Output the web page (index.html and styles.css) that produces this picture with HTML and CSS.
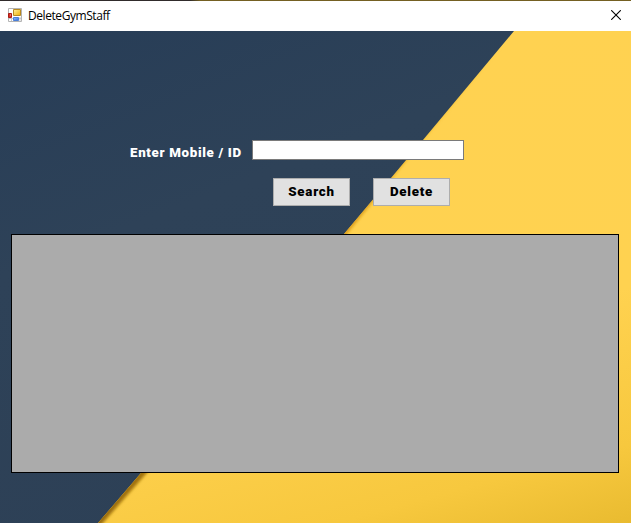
FILE: index.html
```html
<!DOCTYPE html>
<html lang="en">
<head>
<meta charset="utf-8">
<title>DeleteGymStaff</title>
<link rel="stylesheet" href="styles.css">
</head>
<body>
<div class="window">
  <header class="titlebar">
    <svg class="app-icon" width="14" height="14" viewBox="0 0 14 14">
      <defs>
        <linearGradient id="gold" x1="0" y1="0" x2="1" y2="1"><stop offset="0" stop-color="#fff0a0"/><stop offset="1" stop-color="#eeb000"/></linearGradient>
        <linearGradient id="blue" x1="0" y1="0" x2="1" y2="1"><stop offset="0" stop-color="#9cc4ff"/><stop offset="1" stop-color="#2868d8"/></linearGradient>
      </defs>
      <path d="M.5.5h13v13H.5z" fill="#fff" stroke="#b4b4b4"/>
      <path d="M3.500 10v3M12 9v4M1 10.500h12" stroke="#c9c9c9"/>
      <path d="M.5 5.500h3v4h-3z" fill="#d83028" stroke="#a81c14"/>
      <path d="M2 7h1" stroke="#ffb0a0"/>
      <path d="M5.500 1.500h7v6h-7z" fill="url(#gold)" stroke="#b88a20"/>
      <path d="M5.500 9.500h5v3h-5z" fill="url(#blue)" stroke="#4a7fd8"/>
    </svg>
    <h1 class="title">DeleteGymStaff</h1>
    <svg class="close" width="10" height="10" viewBox="0 0 10 10"><path d="M.2.2l9.600 9.600M9.800.2l-9.600 9.600" stroke="#000" stroke-width="1.100"/></svg>
  </header>
  <main class="form">
    <svg class="backdrop" width="631" height="492" viewBox="0 0 631 492">
      <defs>
        <linearGradient id="navy" x1="0" y1="0" x2=".5" y2="1"><stop offset="0" stop-color="#273d57"/><stop offset=".4" stop-color="#2e4258"/><stop offset="1" stop-color="#2d4056"/></linearGradient>
        <linearGradient id="yellow" gradientUnits="userSpaceOnUse" x1="500" y1="0" x2="631" y2="492"><stop offset="0" stop-color="#ffd251"/><stop offset=".55" stop-color="#ffd250"/><stop offset=".85" stop-color="#f7c83e"/><stop offset="1" stop-color="#e9bb30"/></linearGradient>
        <linearGradient id="shade" x1="0" y1="0" x2="0" y2="1"><stop offset="0" stop-color="#d99b16" stop-opacity="0"/><stop offset=".4" stop-color="#d99b16"/><stop offset="1" stop-color="#966a08"/></linearGradient>
        <filter id="soft" x="-10%" y="-10%" width="120%" height="120%"><feGaussianBlur stdDeviation="1.800"/></filter>
        <clipPath id="sheet"><path d="M514 0L423 109L344 203L141 442L98 492H631V0z"/></clipPath>
      </defs>
      <path d="M0 0h631v492H0z" fill="url(#navy)"/>
      <path d="M514 0L423 109L344 203L141 442L98 492H631V0z" fill="url(#yellow)"/>
      <g clip-path="url(#sheet)"><path d="M514 0L415 109L336 203L133 442L80 502H94L145 444L346 204L423 109z" fill="url(#shade)" filter="url(#soft)"/></g>
    </svg>
    <div class="field">
      <label class="label" for="staff">Enter Mobile / ID</label>
      <input class="entry" id="staff" type="text">
    </div>
    <div class="actions">
      <button class="button" type="button">Search</button>
      <button class="button" type="button">Delete</button>
    </div>
    <div class="grid"></div>
  </main>
</div>
</body>
</html>
```

FILE: styles.css
```css
* { box-sizing: border-box; }
body { margin: 0; overflow: hidden; }
.window { width: 631px; height: 523px; display: flex; flex-direction: column; }
.titlebar {
  height: 31px;
  padding: 0 10px 0 8px;
  display: flex;
  align-items: center;
  background: linear-gradient(90deg, #302b2b 0 190px, #746022 200px) top / 100% 1px no-repeat #fff;
}
.app-icon { margin-bottom: 1px; }
.title {
  margin: 0 auto 0 6px;
  font: 400 12px/16px "Open Sans", "Noto Sans", sans-serif;
  letter-spacing: -0.43px;
  color: #000;
}
.close { margin-bottom: 1px; }
.form {
  position: relative;
  height: 492px;
  padding: 109px 12px 0 11px;
}
.backdrop { position: absolute; inset: 0; z-index: -1; }
.field { display: flex; padding-left: 119px; height: 20px; }
.label {
  width: 122px;
  padding-top: 5px;
  font: 900 13.33px/16px Roboto, sans-serif;
  letter-spacing: 0.67px;
  white-space: nowrap;
  color: #fff;
}
.entry {
  width: 212px;
  height: 20px;
  padding: 0 3px;
  border: 1px solid #7a7a7a;
  border-radius: 0;
  background: #fff;
  outline: 0;
}
.actions { display: flex; gap: 23px; padding-left: 262px; margin: 18px 0 28px; }
.button {
  width: 77px;
  height: 28px;
  padding: 0;
  border: 1px solid #adadad;
  border-radius: 0;
  background: #e1e1e1;
  color: #000;
  font: 900 13.33px/16px Roboto, sans-serif;
  letter-spacing: 0.75px;
}
.grid { height: 239px; border: 1px solid #000; background: #ababab; }
```
